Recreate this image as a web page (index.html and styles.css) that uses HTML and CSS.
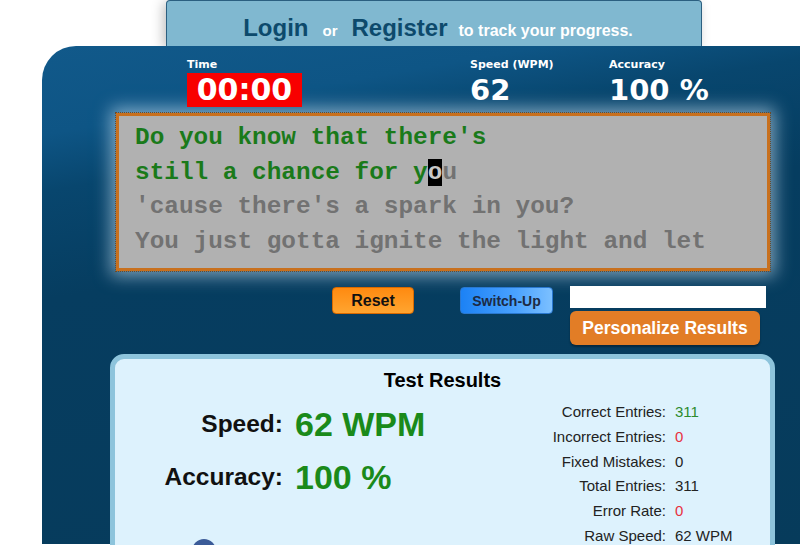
FILE: index.html
```
<!DOCTYPE html>
<html lang="en">
<head>
  <meta charset="UTF-8">
  <meta name="viewport" content="width=device-width, initial-scale=1.0">
  <title>Typing Test</title>

  <link rel="stylesheet" href="styles.css">
</head>
<body>

  <div class="login-tab">
    <a class="big-link">Login</a>
    <span class="or">or</span>
    <a class="big-link">Register</a>
    <span class="track">to track your progress.</span>
  </div>

  <div class="panel">
    <div class="stats">
      <div class="stat stat-time">
        <span class="stat-label">Time</span>
        <span class="stat-value time-box">00:00</span>
      </div>
      <div class="stat stat-speed">
        <span class="stat-label">Speed (WPM)</span>
        <span class="stat-value">62</span>
      </div>
      <div class="stat">
        <span class="stat-label">Accuracy</span>
        <span class="stat-value">100 %</span>
      </div>
    </div>

    <div class="text-box">
      <div class="line typed">Do you know that there's</div>
      <div class="line"><span class="typed">still a chance for y</span><span class="cursor">o</span><span class="pending">u</span></div>
      <div class="line pending">'cause there's a spark in you?</div>
      <div class="line pending">You just gotta ignite the light and let</div>
    </div>

    <div class="controls">
      <button class="btn btn-reset">Reset</button>
      <button class="btn btn-switch">Switch-Up</button>
      <div class="personalize">
        <input type="text" class="name-input">
        <button class="btn btn-personalize">Personalize Results</button>
      </div>
    </div>

    <div class="results">
      <div class="results-title">Test Results</div>
      <div class="results-body">
        <div class="results-main">
          <div class="main-grid">
            <span class="main-label">Speed:</span>
            <span class="main-value">62 WPM</span>
            <span class="main-label">Accuracy:</span>
            <span class="main-value">100 %</span>
          </div>
          <div class="share-dot"></div>
        </div>
        <div class="details">
          <span class="d-label">Correct Entries:</span><span class="good">311</span>
          <span class="d-label">Incorrect Entries:</span><span class="bad">0</span>
          <span class="d-label">Fixed Mistakes:</span><span>0</span>
          <span class="d-label">Total Entries:</span><span>311</span>
          <span class="d-label">Error Rate:</span><span class="bad">0</span>
          <span class="d-label">Raw Speed:</span><span>62 WPM</span>
        </div>
      </div>
    </div>
  </div>

</body>
</html>
```

FILE: styles.css
```
body {
  margin: 0;
  height: 545px;
  overflow: hidden;
  background-color: white;
  font-family: "Liberation Sans", Arial, sans-serif;
}

.login-tab {
  margin-left: 166px;
  width: 536px;
  height: 46px;
  background-color: #80b8d0;
  border: 1px solid #2b5f80;
  border-bottom: none;
  border-radius: 4px 4px 0 0;
  box-shadow: -3px 2px 12px rgba(0, 0, 0, 0.25);
  display: flex;
  justify-content: center;
  align-items: baseline;
  gap: 0 11px;
  padding: 13px 0 0 8px;
  box-sizing: border-box;
  font-weight: bold;
}

.big-link {
  color: #0d4a6c;
  font-size: 24px;
}

.or {
  color: white;
  font-size: 15px;
  margin: 0 3px;
}

.track {
  color: white;
  font-size: 16px;
}

.panel {
  margin-left: 42px;
  width: 780px;
  height: 498px;
  padding-top: 12px;
  box-sizing: border-box;
  border-radius: 34px 0 0 0;
  background: linear-gradient(170deg, #11598a 0%, #0e5585 14%, #08466e 23%, #063d60 40%, #063b5b 100%);
}

.stats {
  display: flex;
  padding-left: 145px;
  color: white;
  font-family: "DejaVu Sans", Verdana, sans-serif;
  font-weight: bold;
}

.stat {
  display: flex;
  flex-direction: column;
  align-items: flex-start;
}

.stat-time {
  width: 283px;
}

.stat-speed {
  width: 139px;
}

.stat-label {
  font-size: 11px;
  line-height: 13px;
  margin-bottom: 2px;
}

.stat-value {
  font-size: 29px;
  line-height: 34px;
}

.time-box {
  background-color: #f80000;
  width: 115px;
  text-align: center;
  font-size: 30px;
}

.text-box {
  margin: 6px 0 0 74px;
  width: 654px;
  height: 158px;
  box-sizing: border-box;
  background-color: #b1b1b1;
  border: 3px solid #c8701e;
  outline: 1px dotted #6b4a2a;
  box-shadow: 0 0 16px 5px rgba(220, 240, 255, 0.55);
  padding: 5px 0 0 16px;
  font-family: "Liberation Mono", "Courier New", monospace;
  font-weight: bold;
  font-size: 24.4px;
  line-height: 34.5px;
}

.line {
  white-space: pre;
}

.typed {
  color: #1a7a1a;
}

.pending {
  color: #727272;
}

.cursor {
  background-color: black;
  color: #c8c8c8;
}

.controls {
  display: flex;
  align-items: flex-start;
  padding-left: 290px;
  margin-top: 15px;
}

.btn {
  font-family: "Liberation Sans", Arial, sans-serif;
  font-weight: bold;
  border-radius: 4px;
  cursor: pointer;
  padding: 0;
}

.btn-reset {
  margin-top: 1px;
  width: 82px;
  height: 27px;
  font-size: 16px;
  color: #111;
  border: 1px solid #d96a00;
  background: linear-gradient(#ff8a10, #ffa530);
}

.btn-switch {
  margin: 1px 0 0 46px;
  width: 93px;
  height: 27px;
  font-size: 14px;
  color: #1c2a44;
  border: 1px solid #2a78d0;
  background: linear-gradient(90deg, #1c82f5, #4aa2ff 60%, #7cc0ff);
}

.personalize {
  display: flex;
  flex-direction: column;
  margin-left: 17px;
}

.name-input {
  width: 196px;
  height: 22px;
  box-sizing: border-box;
  border: none;
  background-color: white;
}

.btn-personalize {
  margin-top: 3px;
  width: 190px;
  height: 34px;
  font-size: 17.5px;
  color: white;
  border: none;
  border-radius: 6px;
  background-color: #e27d26;
  box-shadow: 0 2px 2px rgba(0, 0, 0, 0.35);
}

.results {
  margin: 9px 0 0 68px;
  width: 665px;
  height: 200px;
  box-sizing: border-box;
  border: 5px solid #8dc4dc;
  border-radius: 14px 14px 0 0;
  background-color: #ddf2fd;
  padding-top: 9px;
}

.results-title {
  text-align: center;
  font-size: 20px;
  line-height: 24px;
  font-weight: bold;
  color: black;
}

.results-body {
  display: flex;
  align-items: flex-start;
}

.results-main {
  width: 425px;
}

.main-grid {
  display: grid;
  grid-template-columns: 168px auto;
  column-gap: 12px;
  row-gap: 3px;
  align-items: center;
  margin-top: 7px;
  line-height: 50px;
}

.main-label {
  text-align: right;
  font-weight: bold;
  font-size: 24.5px;
  color: #111;
}

.main-value {
  font-weight: bold;
  font-size: 34px;
  color: #1a8a1a;
}

.share-dot {
  margin: 37px 0 0 77px;
  width: 24px;
  height: 24px;
  border-radius: 50%;
  background-color: #3b5b98;
}

.details {
  display: grid;
  grid-template-columns: 126px auto;
  align-content: start;
  column-gap: 9px;
  margin-top: 8px;
  font-size: 15px;
  line-height: 24.8px;
  color: #222;
}

.d-label {
  text-align: right;
  white-space: nowrap;
}

.good {
  color: #2e8b2e;
}

.bad {
  color: #e8303e;
}
```
